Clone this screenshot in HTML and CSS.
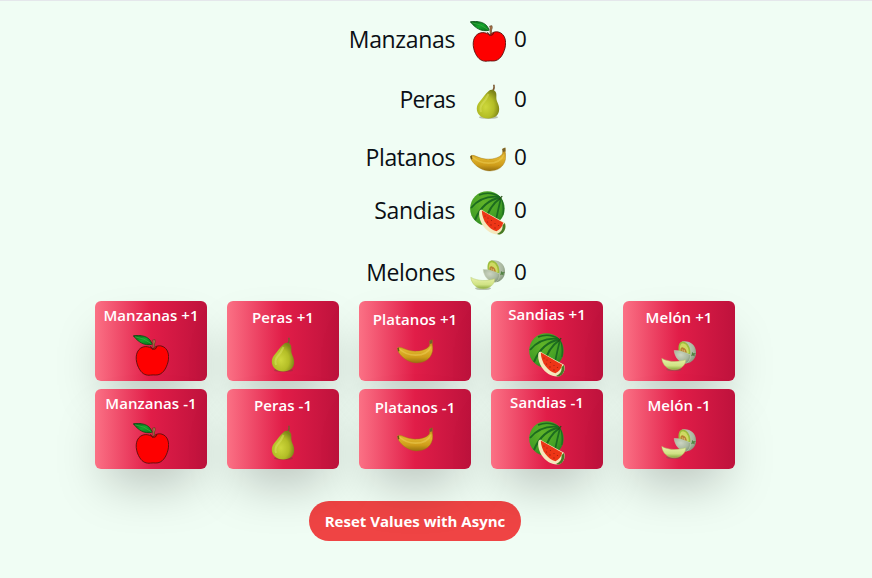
FILE: index.html
```html
<!DOCTYPE html>
<html lang="es">
<head>
<meta charset="utf-8">
<title>Frutas</title>
<link rel="stylesheet" href="styles.css">
</head>
<body>
<svg class="defs" aria-hidden="true">
  <defs>
    <linearGradient id="leaf" x1="0" y1="0" x2="1" y2="1"><stop offset="0" stop-color="#065b12"/><stop offset=".5" stop-color="#13a52c"/><stop offset="1" stop-color="#087018"/></linearGradient>
    <radialGradient id="pearSkin" cx=".4" cy=".6" r=".62"><stop offset="0" stop-color="#ced83c"/><stop offset=".6" stop-color="#b3bd26"/><stop offset="1" stop-color="#7d8417"/></radialGradient>
    <linearGradient id="bananaSkin" x1="0" y1="0" x2="0" y2="1"><stop offset="0" stop-color="#b98511"/><stop offset=".45" stop-color="#dfb32c"/><stop offset=".75" stop-color="#cf9d1a"/><stop offset="1" stop-color="#98700e"/></linearGradient>
    <radialGradient id="rind" cx=".4" cy=".35" r=".7"><stop offset="0" stop-color="#62b428"/><stop offset=".7" stop-color="#429f25"/><stop offset="1" stop-color="#27801f"/></radialGradient>
    <linearGradient id="melonFlesh" x1="0" y1="0" x2="0" y2="1"><stop offset="0" stop-color="#eaf3ad"/><stop offset=".65" stop-color="#cfe283"/><stop offset="1" stop-color="#87a83c"/></linearGradient>
    <radialGradient id="melonSkin" cx=".4" cy=".35" r=".7"><stop offset="0" stop-color="#ccd5c2"/><stop offset=".65" stop-color="#a9b89f"/><stop offset="1" stop-color="#82957a"/></radialGradient>
    <clipPath id="melonRound"><circle cx="17.4" cy="17.6" r="17.3"/></clipPath>
  </defs>
  <symbol id="apple" viewBox="0 0 36 42">
    <path d="M20 14.4C16 10.700 9.500 10.500 5.800 14.800C1.500 20 3 29 6.800 34.800C9.500 39.200 13.500 40.700 17.500 40.100C19.500 39.800 21 39.900 22.500 40C29.500 40.400 33.300 33.500 35 27C36.800 19.500 34.600 13 29 11.200C25.500 10.100 22 11.200 20 14.400Z" fill="#fe0000" stroke="#59100b" stroke-width=".9"/>
    <path d="M17.500 11.200Q18.600 14.700 21.300 14.300Q23.500 14 23.700 11.500" fill="none" stroke="#5d1009" stroke-width="1"/>
    <path d="M20.100 13L20 8.500Q20.300 6.500 19.600 5.100L22 4.700Q22.700 7 21.500 9L21.400 13Z" fill="#b47c50" stroke="#563617" stroke-width=".6"/>
    <path d="M.3.800C7-.2 16.500.4 19.200 9.200C11 11.300 5 6.600.3.800Z" fill="url(#leaf)" stroke="#084b12" stroke-width=".8"/>
    <path d="M2 1.800Q11 2.800 18.500 8.800" fill="none" stroke="#3fae43" stroke-width=".7"/>
  </symbol>
  <symbol id="pear" viewBox="0 0 36 36">
    <ellipse cx="18.500" cy="33.300" rx="9.500" ry="1.700" fill="#4e4d2a" opacity=".35"/>
    <path d="M21.500 6.800Q24 4.500 23 .8L24.700.700Q25.500 4 23.800 7.500Z" fill="#7c5931"/>
    <path d="M19 6.700C21.500 4.800 25.600 6.200 26.200 9.300C26.800 12.500 25.600 14.500 27.500 18.500C30 23.500 29.800 29 26.300 32C22 35.400 13.500 35.200 9.800 31.500C5.600 27.500 6.200 21.500 9.300 18C13 13.800 15.100 9.600 19 6.700Z" fill="url(#pearSkin)"/>
    <path d="M18.500 10Q16 16 12.500 19.500Q9.500 23 11 28" fill="none" stroke="#dfe668" stroke-width="2" opacity=".45"/>
  </symbol>
  <symbol id="banana" viewBox="0 0 36 26">
    <path d="M.4 10.200C.2 8.200 2.500 8.100 4.500 8.600C9 10.700 14 12.500 20 12.100C26 11.700 31.300 9.500 32.500 6.200Q33 4 32.400 2L35.200.8Q35.500 3 35.300 5.500C36.600 10.500 35.200 17 30.500 20.600C25 24.700 16.500 24.900 10.500 21.500C6 19 1.500 14.900.4 10.200Z" fill="url(#bananaSkin)" stroke="#9a7113" stroke-width=".4"/>
    <path d="M2.500 10Q9 16.200 18.500 16.200Q30.500 16.200 34 7.500" fill="none" stroke="#f5d964" stroke-width="1.700" opacity=".4"/>
    <path d="M32.400 2L35.200.8L35.300 4.300L32.900 4.900Z" fill="#74602d"/>
    <path d="M.3 9.200L1.800 8.400L2.400 12L1.100 12.500Z" fill="#6d5418"/>
  </symbol>
  <symbol id="watermelon" viewBox="0 0 36 44">
    <circle cx="17.400" cy="17.600" r="17.300" fill="url(#rind)"/>
    <g clip-path="url(#melonRound)" fill="none" stroke="#1c6b1f" stroke-width="1.500">
      <path d="M30.500 6Q20-.5 9 4"/>
      <path d="M30.500 6Q12 3.500 1 17" stroke-width="1.900"/>
      <path d="M30.500 6.500Q13 9.500 5 29" stroke-width="2"/>
      <path d="M30.500 7Q19 15 15 31" stroke-width="2"/>
      <path d="M31 7Q28.500 17 26 29" stroke-width="1.700"/>
      <path d="M31.500 7Q34 14 33 24" stroke-width="1.300"/>
    </g>
    <path d="M29 8.700L32.200 5.200" stroke="#274e15" stroke-width="1.200"/>
    <path d="M9.500 20C10.500 18 12.500 18.900 14 20.300L35 31.800C36.700 35 35.500 40.700 31 43C25 45 17 41 12.500 34C9.700 29.500 8.500 24 9.500 20Z" fill="#f5e8bd"/>
    <path d="M34.800 32C36.500 36 35 41.200 30.500 43.200Q28.500 43.800 27 43.100C31.500 41 33 37.500 32.500 34.300Z" fill="#477b25"/>
    <path d="M11.800 19.600L33.300 31.800Q31.500 38 26.500 40.200C19 38.500 12 30 11.800 19.600Z" fill="#ed3516"/>
    <g fill="#9a2011"><circle cx="15" cy="25" r=".6"/><circle cx="18" cy="27" r=".6"/><circle cx="17.500" cy="31" r=".6"/><circle cx="21.500" cy="29.500" r=".6"/><circle cx="21" cy="34" r=".65"/><circle cx="25" cy="32.500" r=".6"/><circle cx="25" cy="37" r=".65"/><circle cx="28.500" cy="34.500" r=".6"/></g>
  </symbol>
  <symbol id="melon" viewBox="0 0 36 32">
    <ellipse cx="13" cy="29.500" rx="8" ry="1.600" fill="#5e684b" opacity=".4"/>
    <path d="M21 1.500C28-.1 35 4.500 35 12C35.200 18 31.500 22.500 25.500 23.300L18 14Z" fill="url(#melonSkin)"/>
    <path d="M17.700 11C16.800 5.500 18.600 1.300 22 1.600C27 2.100 30.200 8.500 29.200 14.600Z" fill="#9dbd3c"/>
    <path d="M19 10.500C18.500 6 19.700 3.100 22 3.300C25.500 3.800 28 8.500 27.700 13.200Z" fill="#cfda62"/>
    <path d="M19.500 11C19 8.500 20.300 7 22 7.400C24.400 8 25.900 10.500 25.700 13.200Z" fill="#b88131"/>
    <path d="M21.200 9.300l1 1.800m1.100-1.200l.3 2" stroke="#ead191" stroke-width=".6"/>
    <path d="M13.200 10.500C18 10.300 24 12 29.700 15.100C29.500 19 28 22 25.300 23.200C19.500 23.600 13.900 18 13.200 10.500Z" fill="url(#melonSkin)" stroke="#c6d0b5" stroke-width=".5"/>
    <path d="M31 12l1.500 1.200 2.500-.2-1.500 1.500.2 2-1.700-1.100-2 .8.8-2Z" fill="#528343"/>
    <path d="M.8 18.400C8 22.200 16 22.300 24.700 19.800C24.700 25.500 19.500 29.800 13.200 29.700C6.500 29.600 1.500 25 .8 18.400Z" fill="url(#melonFlesh)" stroke="#b4c968" stroke-width=".5"/>
  </symbol>
</svg>

<main class="page">
  <section class="stats">
    <div class="stat stat-apple"><span class="stat-name">Manzanas</span><svg class="fruit apple"><use href="#apple"/></svg><span class="stat-value">0</span></div>
    <div class="stat stat-pear"><span class="stat-name">Peras</span><svg class="fruit pear"><use href="#pear"/></svg><span class="stat-value">0</span></div>
    <div class="stat stat-banana"><span class="stat-name">Platanos</span><svg class="fruit banana"><use href="#banana"/></svg><span class="stat-value">0</span></div>
    <div class="stat stat-watermelon"><span class="stat-name">Sandias</span><svg class="fruit watermelon"><use href="#watermelon"/></svg><span class="stat-value">0</span></div>
    <div class="stat stat-melon"><span class="stat-name">Melones</span><svg class="fruit melon"><use href="#melon"/></svg><span class="stat-value">0</span></div>
  </section>

  <section class="actions">
    <button class="card card-apple"><span>Manzanas +1</span><svg class="fruit apple"><use href="#apple"/></svg></button>
    <button class="card card-pear"><span>Peras +1</span><svg class="fruit pear"><use href="#pear"/></svg></button>
    <button class="card card-banana"><span>Platanos +1</span><svg class="fruit banana"><use href="#banana"/></svg></button>
    <button class="card card-watermelon"><span>Sandias +1</span><svg class="fruit watermelon"><use href="#watermelon"/></svg></button>
    <button class="card card-melon"><span>Melón +1</span><svg class="fruit melon"><use href="#melon"/></svg></button>
    <button class="card card-apple"><span>Manzanas -1</span><svg class="fruit apple"><use href="#apple"/></svg></button>
    <button class="card card-pear"><span>Peras -1</span><svg class="fruit pear"><use href="#pear"/></svg></button>
    <button class="card card-banana"><span>Platanos -1</span><svg class="fruit banana"><use href="#banana"/></svg></button>
    <button class="card card-watermelon"><span>Sandias -1</span><svg class="fruit watermelon"><use href="#watermelon"/></svg></button>
    <button class="card card-melon"><span>Melón -1</span><svg class="fruit melon"><use href="#melon"/></svg></button>
  </section>

  <button class="reset">Reset Values with Async</button>
</main>
</body>
</html>
```
FILE: styles.css
```css
* { box-sizing: border-box; }

body {
  margin: 0;
  background: #f0fdf4;
  color: #0b0f14;
  font-family: "Open Sans", "Noto Sans", sans-serif;
}

button { border: 0; font-family: inherit; color: #fff; }

.defs { display: block; width: 0; height: 0; }

.page {
  height: 578px;
  overflow: hidden;
  border-top: 1px solid #e5e7eb;
}

/* counters */
.stats { padding-top: 18px; }

.stat {
  display: grid;
  grid-template-columns: 455px 36px 20px;
  column-gap: 15px;
  align-items: center;
  height: 44px;
  font-size: 23px;
  line-height: 32px;
}

.stat-name { text-align: right; letter-spacing: -0.35px; }
.stat-name, .stat-value { margin-top: -7px; }
.stat-apple .stat-name, .stat-apple .stat-value { margin-top: -5px; }
.stat-apple .fruit { margin-top: 1px; }
.stat-pear .stat-name { letter-spacing: -0.9px; }
.stat-value { margin-left: -7px; font-size: 22.500px; }

.stat-pear { margin-top: 17px; }
.stat-banana { margin-top: 14px; }
.stat-watermelon { margin-top: 9px; }
.stat-melon { margin-top: 18px; }

.fruit { display: block; width: 36px; flex: none; }
.apple { height: 42px; }
.pear { height: 36px; }
.banana { height: 26px; }
.watermelon { height: 44px; }
.melon { height: 32px; }

/* buttons */
.actions {
  display: grid;
  grid-template-columns: repeat(5, 112px);
  gap: 8px 20px;
  padding: 4px 0 0 95px;
}

.card {
  display: flex;
  flex-direction: column;
  align-items: center;
  height: 80px;
  padding: 0;
  border-radius: 6px;
  background: linear-gradient(to right, #fb7185, #e11d48, #be123c);
  box-shadow: 0 25px 50px -12px rgba(0, 0, 0, 0.25);
  font-size: 15px;
  font-weight: 600;
  letter-spacing: 0.05px;
  line-height: 20px;
  white-space: nowrap;
}

.card-apple { padding-top: 4px; gap: 10px; }
.card-pear { padding-top: 6px; gap: 10px; }
.card-banana { padding-top: 8px; gap: 10px; }
.card-watermelon { padding-top: 3px; gap: 9px; }
.card-melon { padding-top: 6px; gap: 13px; }

.reset {
  display: block;
  width: 212px;
  height: 40px;
  margin: 32px 0 0 309px;
  padding: 0;
  border-radius: 20px;
  background: #ef4444;
  font-size: 15px;
  font-weight: 700;
  line-height: 24px;
  white-space: nowrap;
}
```
